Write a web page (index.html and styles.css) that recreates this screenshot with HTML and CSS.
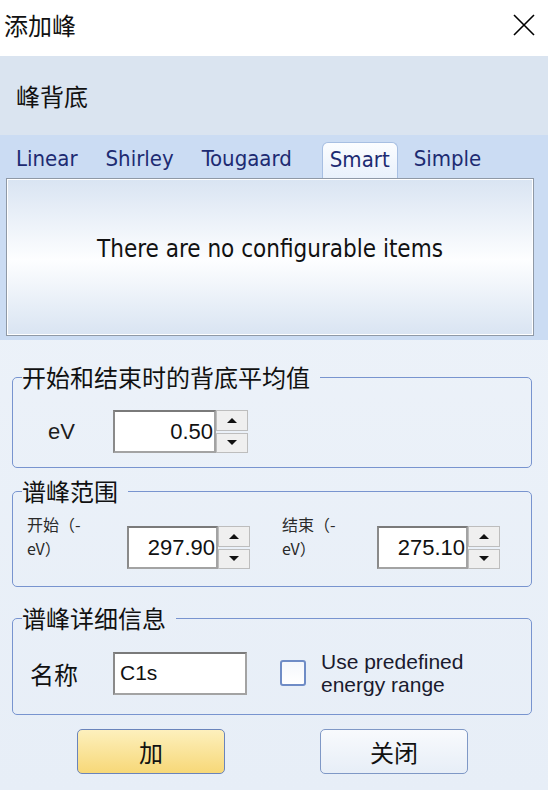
FILE: index.html
```html
<!DOCTYPE html>
<html lang="zh">
<head>
  <meta charset="UTF-8">
  <title>添加峰</title>
  <link rel="stylesheet" href="styles.css">
</head>
<body>
  <div class="titlebar">
    <span class="title">添加峰</span>
    <svg class="close" width="22" height="22" viewBox="0 0 22 22">
      <path d="M1 1 L21 21 M21 1 L1 21" stroke="#000" stroke-width="1.6" fill="none"/>
    </svg>
  </div>

  <div class="section-head">峰背底</div>

  <div class="tabctl">
    <div class="tabs">
      <span class="tab">Linear</span>
      <span class="tab">Shirley</span>
      <span class="tab">Tougaard</span>
      <span class="tab active">Smart</span>
      <span class="tab">Simple</span>
    </div>
    <div class="tabpanel">There are no configurable items</div>
  </div>

  <div class="lower">
    <fieldset class="group g1">
      <legend>开始和结束时的背底平均值</legend>
      <div class="row">
        <span class="lbl-ev">eV</span>
        <div class="spin">
          <div class="spin-input w103">0.50</div>
          <div class="spin-btns"><span class="up"></span><span class="down"></span></div>
        </div>
      </div>
    </fieldset>

    <fieldset class="group g2">
      <legend>谱峰范围</legend>
      <div class="row range">
        <span class="small-lbl">开始（-<br>eV）</span>
        <div class="spin">
          <div class="spin-input w91">297.90</div>
          <div class="spin-btns"><span class="up"></span><span class="down"></span></div>
        </div>
        <span class="small-lbl second">结束（-<br>eV）</span>
        <div class="spin">
          <div class="spin-input w91">275.10</div>
          <div class="spin-btns"><span class="up"></span><span class="down"></span></div>
        </div>
      </div>
    </fieldset>

    <fieldset class="group g3">
      <legend>谱峰详细信息</legend>
      <div class="row">
        <span class="lbl-name">名称</span>
        <div class="text-input">C1s</div>
        <span class="checkbox"></span>
        <span class="check-lbl">Use predefined<br>energy range</span>
      </div>
    </fieldset>

    <div class="buttons">
      <button class="btn primary">加</button>
      <button class="btn">关闭</button>
    </div>
  </div>
</body>
</html>
```

FILE: styles.css
```css
body {
  margin: 0;
  width: 548px;
  height: 790px;
  overflow: hidden;
  font-family: "Liberation Sans", "Noto Sans CJK SC", sans-serif;
  background: linear-gradient(#eff4fa, #e7eef7);
  color: #111;
}
.titlebar {
  height: 56px;
  background: #fff;
  display: flex;
  justify-content: space-between;
  align-items: flex-start;
  padding: 0 13px 0 4px;
}
.title {
  font-family: "Noto Sans CJK SC", sans-serif;
  font-size: 24px;
  line-height: 30px;
  padding-top: 10px;
}
.close {
  margin-top: 14px;
}
.section-head {
  height: 79px;
  background: #dae4f0;
  padding-left: 16px;
  font-family: "Noto Sans CJK SC", sans-serif;
  font-size: 24px;
  line-height: 79px;
}

/* tab control */
.tabctl {
  background: #cbdcf3;
  padding: 0 14px 4px 6px;
  height: 201px;
}
.tabs {
  display: flex;
  align-items: flex-end;
  height: 43px;
  padding-left: 2px;
}
.tab {
  font-family: "DejaVu Sans Condensed", "DejaVu Sans", sans-serif;
  font-size: 22px;
  line-height: 34px;
  height: 36px;
  padding: 0 14px 0 8px;
  margin-right: 6px;
  color: #1d2b72;
  box-sizing: border-box;
}
.tab.active {
  background: linear-gradient(#fbfdff, #e9f1fb);
  border: 1px solid #a7bfe2;
  border-bottom: none;
  border-radius: 6px 6px 0 0;
  padding: 0 7px;
  margin-left: 10px;
  margin-right: 8px;
}
.tabpanel {
  height: 158px;
  box-sizing: border-box;
  border: 1px solid #8f99a6;
  box-shadow: inset 0 0 0 1px #fff;
  background: linear-gradient(#d9e4f2, #fdfeff 52%, #d9e4f2);
  display: flex;
  align-items: center;
  justify-content: center;
  padding-bottom: 16px;
  font-family: "DejaVu Sans Condensed", "DejaVu Sans", sans-serif;
  font-size: 24px;
}

/* group boxes */
.lower {
  padding: 22px 16px 0 12px;
}
.group {
  margin: 0;
  padding: 0;
  border: 1px solid #7894cf;
  border-radius: 5px;
}
.group legend {
  margin-left: 9px;
  padding: 0 10px 0 0;
  font-family: "Noto Sans CJK SC", sans-serif;
  font-size: 24px;
  line-height: 30px;
}
.row {
  display: flex;
  align-items: center;
}
.g1 .row {
  padding: 18px 0 14px 35px;
}
.lbl-ev {
  width: 65px;
  font-size: 22px;
  color: #1d1d1d;
}
.spin {
  display: flex;
  height: 43px;
}
.spin-input {
  box-sizing: border-box;
  height: 43px;
  background: #fff;
  border: 2px solid #a3a3a3;
  border-top-color: #7a7a7a;
  border-left-color: #8a8a8a;
  text-align: right;
  padding-right: 1px;
  font-size: 22px;
  line-height: 39px;
}
.w103 { width: 103px; }
.w91 { width: 91px; }
.spin-btns {
  width: 32px;
  display: flex;
  flex-direction: column;
  gap: 2px;
}
.spin-btns span {
  flex: 1;
  background: #efefef;
  border: 1px solid #bdbdbd;
  display: flex;
  align-items: center;
  justify-content: center;
}
.spin-btns .up::after {
  content: "";
  border-left: 5px solid transparent;
  border-right: 5px solid transparent;
  border-bottom: 5px solid #111;
}
.spin-btns .down::after {
  content: "";
  border-left: 5px solid transparent;
  border-right: 5px solid transparent;
  border-top: 5px solid #111;
}

.g2 {
  margin-top: 8px;
}
.g2 .row {
  align-items: flex-start;
  padding: 6px 0 17px 14px;
}
.small-lbl {
  width: 100px;
  font-family: "Noto Sans CJK SC", sans-serif;
  font-size: 16px;
  line-height: 24px;
  color: #2a2a2a;
}
.small-lbl.second {
  width: 95px;
  margin-left: 32px;
}
.range .spin {
  margin-top: 14px;
}

.g3 {
  margin-top: 16px;
}
.g3 .row {
  padding: 17px 0 18px 17px;
}
.lbl-name {
  width: 83px;
  font-family: "Noto Sans CJK SC", sans-serif;
  font-size: 24px;
}
.text-input {
  box-sizing: border-box;
  width: 134px;
  height: 43px;
  background: #fff;
  border: 2px solid #a3a3a3;
  border-top-color: #7a7a7a;
  border-left-color: #8a8a8a;
  padding-left: 5px;
  font-size: 21px;
  line-height: 37px;
}
.checkbox {
  box-sizing: border-box;
  width: 26px;
  height: 26px;
  margin-left: 33px;
  border: 2px solid #6f8cc6;
  border-radius: 3px;
  background: linear-gradient(#f4f7fc, #ffffff);
}
.check-lbl {
  margin-left: 15px;
  font-size: 21px;
  line-height: 23px;
  color: #1a1a2e;
}

/* buttons */
.buttons {
  display: flex;
  gap: 95px;
  padding: 14px 0 0 65px;
}
.btn {
  width: 148px;
  height: 45px;
  border: 1px solid #7f98c6;
  border-radius: 5px;
  background: linear-gradient(#f8fafd, #e7eef7);
  font-family: "Noto Sans CJK SC", sans-serif;
  font-size: 24px;
  color: #111;
  padding: 0;
}
.btn.primary {
  border-color: #6a84bb;
  background: linear-gradient(#fdf0bd, #f7d878);
}
```
